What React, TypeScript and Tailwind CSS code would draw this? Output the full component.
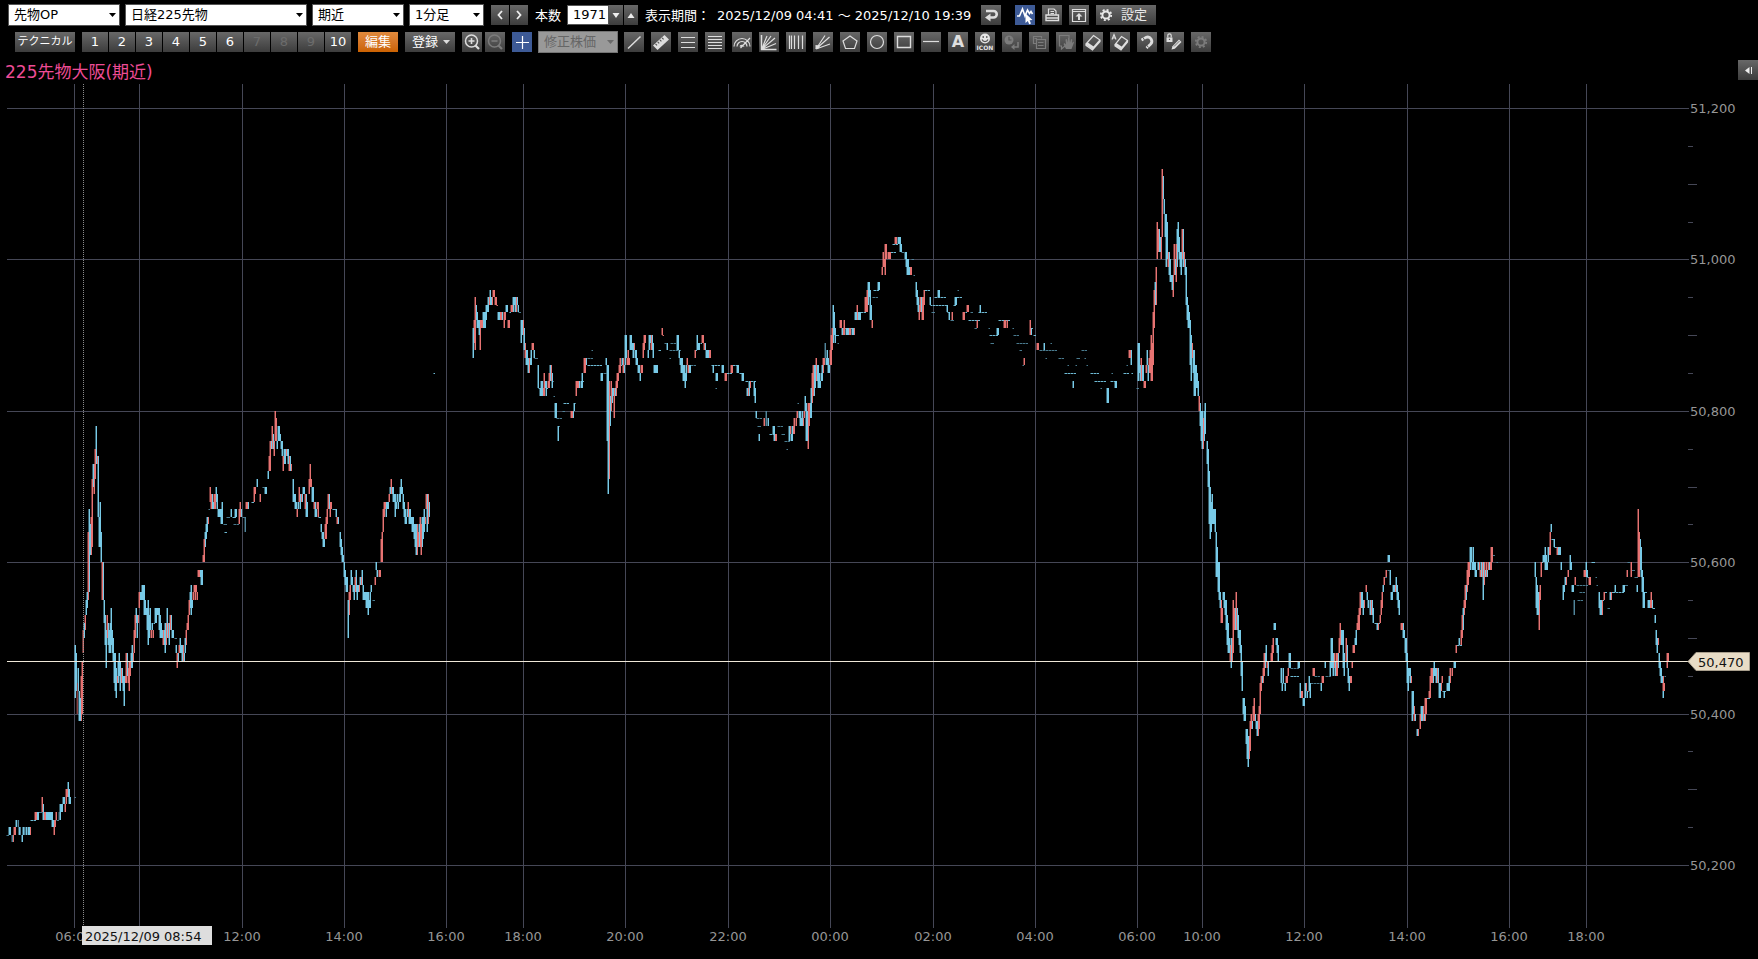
import React from "react";

type Tone = "b" | "r" | "d" | "e";

const toneFill: Record<Tone, string> = {
  b: "#7bd0ee",
  r: "#ee7776",
  d: "#5389a0",
  e: "#8a4545",
};

// Each token is: x, tone, high[-low], optional width. Prices are (price - 50,000) / 10.
const bars = `
7d24w2 9b25-24 10b25-24 12d24-23 13r24-23 14r25-24 15r25-24 16b26-25 18d26-25 19b25-24 20d25-24 22b24-23 23b25-24 24d25-24 26b25-24 28b25-24 29b25-24 30r25-24
31b26w4 35r27-26w2 37b27-26w2 39d27w3 42r29-27 43b28-26 44r27-26w2 46b27-26w2 48b27-26w2 50b27-26 51b27-26 52b27-25 53b26-25 54r26-24 55r26-25 56r27-26 57d26w2 59d27-26 60b28-26 61b28-27 62b28-27 63b29-28 64b29-28 65r28-27 66r30-28 67r30-29 68b31-29 69b30-28 70b29-28 75d29
75b49-42 76b48-43 77e44-40 78b46-43 79b43-39 80b42-39 81r45-39 82r47-40 83r51-48 84b52-50 85r53-51 86b55-53 87b56-54 88r64-55 89b67-56 90b65-61 91r66-61 92r71-62 93b73-70 94r73-69 95r75-71 96b78-73 97r74-73 98b74-66 99b66-62 100b68-62 101b64-60 102r60-55 103b60-55 104b55-52 105b53-49 106b51-46 107r53-50 108b52-49 109b51-48 110b52-48 111b54-49 112b51-48 113b50-47 114b48-44 115b48-43 116b46-42 117r45-44 118b47-44 119b48-45 120b47-43 121r46-44 122b46-44 123b45-43 124b45-41 125r45-44 126r48-44 127b48-45 128r46-44 129r47-43 130r47-45 131b48-46 132b49-46 133r48-47 134r51-48 135r53-50 136b54-52 137b53-50 138r53-52 139r56-54
140b56-55 141b56-55 142b57-55 143b57-55 144b57-53 145b55-53 146b54-53 147b54-51 148b55-49 149b53-50 150b54-51 151r51-50 152b52-51 153r51-50 154b52 155b54-52 156b54-52 157b54-53 158b54-53 159b54-51 160b53-50 161b52-50 162b51-50 163r51-49 164b51-49 165b52-48 166r52-49 167b54-50 168r52-50 169b52-49 170r53-51 171b53-51 172b51-50 173b51-50 175d50w2 176b49-48 177r48-46 178b48-47 179r49-48 180b50-48 181b49-48 182b49-47 183r49-47 184b48-47 185b50-48 186r51-49 187r52-51 188r53-51 189r55-53 190b56-54 191b57-53 192b55-54 193r56-55 194r57-56 195r57-55 196r57-56 197r56-55 198r59-58 199r59-58 200b59-58 201b59-57 202b59-57 203r61-60 204r63-60 205b64-62 206b65-63 207b66-64 208r66-65 209d67
210r70-68 211r69-67 212b69-67 213b68-67 214r69-67 215r69-67 216b70-68 217b69-67 218b67-66 219b67-66 220b67-66 221b67-65 222b68-65 224d65w3 225b64w2 227d66w3 231b67-66 233b66w3 235b67-66 236b67-66 234d65w4 239r67-65 240r68-66 241b67-66 243d66w3 245d66-64 246r68-67 247r68-67 248b68-67 252b68w2 254r70-68 255r70-69 257b71-70 260r69-68 263d70w2 265b70-69 266b70-69 268b72-71 269r74-72 270r76-72 271b76-75 272r78-75 273b77-75 274r76-74 275r80-76 276r79-76 277b76-75 278b78-76 279b78-76 280b77-76 281b76-75 282b76-74 283r74-72 284b75-73 285b75-73 286r75-74 287b75-74 288b75-73 289r74-72 290b74-72 291r73-72
293b71-68 294b69-68 295b69-67 296b68-67 297r67-66 298b68-67 299r70-68 300b69-67 301r69-68 302b69-68 303b70-69 304b70-69 305r69-67 306b69-66 307b68-66 309r71-69 310r73-70 311r71-70 312b70-68 313b70-68 314r68-67 315b68-66 316b67-66 317r68-67 318r68-66 319b66w2 321b65-64 322b64-63 323b64-62 324b63-62 325r65-63 326r66-63 327r67-65 328r69-67 329b69-67 330r68-66 331r68-67 333b67w3 336b67-66 337r66-65 338b66-65 340b64-62 341b63-61 342b62-60 343b61-60 344b60-58 345b59-57 346b58-56 347b58-56 348b55-50 349r56-53 350r57-55 351b59-57 352b58-57 353b57-56 354b57-55 355r58-56 356b59-56 357b57-55 358b57-56 359r57-56 360b58-57 361r58-57 362b59-57 363b57-55 364b56-55 365b56-55 366b56-54 367b56-54 368b56-53 369b55-54 370b56-54 371b57-56 373d55w2 375r58-57 376b60-59 377b59-58 379r59-58 380r59-58 381r63-60 382r64-60 383r67-64 384r68-66 385r68-67 386b68-66 387b68-67 388b68-67 389r69-68 390b70-69
391r71-69 392b70-69 393b70-68 394b69-68 395b69-66 396b68-67 397b69-68 398b68-67 399b69-68 400b70-68 401b71-69 402b70-69 403b69-67 404b68-66 405b67-65 406b66-65 407b67-66 408r68-66 409b67-65 410b67-65 411b66-65 412b66-64 413b66-64 414b65-63 415b65-62 416b65-61 417r65-61 418r64-62 419b65-62 420r66-62 421r65-61 422b66-62 423b66-63 424b67-64 425r66-65 426r69-67 427b69-64 428r69-65 429b68-66 434b85
473b91-87 474r92-89 475r95-88 476b94-92 477b93-91 478b92-91 479b92-90 480r92-88 481r92-91 482r92-91 483b93-91 484b93-91 485b93-91 486b94-92 487b94-93 488b95-93 489r95-94 490b96-94 491b95-94 492r95-94 493r96-95 494r96-95 495r95-94 496r95-94 497r94 498b93-92 499b93-92 500r93-92 501r93-92 502b93-92 504r93-91 505r93-92 506b94-93 507b94-93 508r92-91 509r92-91 510b93 511r94-93 512r94-93 513b95-93 514b95-94 515b95-93 516r95-93 517b95-94 518b94-93 519d93w2 521b92-89 522b92-90 523r92-90 524b91-88 525r89-87 526b88-86 527b88-86 528b87-85 529r87-85 530b87-86 531b88-86 532r89-88 533r89-88 534b88-87 535d87w3 538b86-83 539b83 540b83-82 541b84-82 542b84-82 543r83-82 544r85-82 545b84-83 546b84-82 547b83 548r84-83 549r85-83 550b86-84 551r86-84 552b85-83 553d84 554d82 555b81-79 556b81-79 557d79w5 558b78-76 559d78 564b81w6 563d80w2 571r80-79 572r80-79 573b80-79 574b81-80 575d81 576r84-82 577r84-83 578r84-83 579b84-83 581b84-83 582b85-83 583b84 584r87-85 585r87-85 586b87-86 588d87w4 592d88 588b86w13 601b85-84w2 604d85w3 606b87-86 607b86-76 608b86-69 609r84-71 610b82-78 611r84-80 612b83-81 613b83-82 614r83-79 615b83-82 616r84-82 617r85-83 618r85-84 619r86-85 620r87-85 621b86 622b87-86 623r87-85 624b86-85 625b90-86 626b90-87 627r87-86 628r88-86 629r87-86 630b90-88 631b90-88 632b89-88 633b89-87 634r89-88 635b88-87 636b88-86 637b87-86 638b86-85 639b86-85 640b85-84 641r86-85 642r86-85
643r89-87 644r90-88 645r90-89 648b88-87 649b90-88 650b90-89 651r90-88 652b90-88 653b89-87 654b86-85w4 659b88w2 662r91-90 663r90 665d89w2 667b89-88 670d88w10 670d87 671d89w6 677b90-88 678b90-88 679b88-87 680b87-86 681b87-85 682b87-85 683b86-84 684b86-84 685b85-83 686b86-84 687r87-86 688r86-85 689b86-85 690b86-85 691d86w4 695r88-87 696b88 697b90-88 698b89-88 699b89-88 701b89 702r90-89 703r90-89 704r89-88 705b89-88 706b88-87 707b88-87 708b88-87 709r88-87 710r88-87
712b86w7 713b86-85 716b85-84w2 716d83 722b86-85 723b86-85 725r85-84w2 727b85w4 731r86-85 732r86-85 733b86w6 737b86-85 738b86-85 740b85w3 742b85-84w2 746b84w2 747b83-82 748r83-82 749b84-82 750r84-83 751b84w4 754b84-82 755b83-81 756b80-79 757d79w6 758d78w3 759b77-76 764r79-78 766d80-78 768b79-78 770b77w4 773b78-77 774b78-76 775r77-76 776r77-76 778d78w5 782d77w3 785d76w6 787d75 789b78-76 790r78-77 791b77-76 792b78-76 793r78-77 794r79-77 796r79-78 797r80-79 798d81 799b80-79 800b80-78 801b79-78 802b80-78 803r79-78 804r80-79 805b82-80 806b81-76 807b80-76 808r81-75 809r81-78 810b81-79 811b83-79 812r85-81 813r86-82 814b86-82 815b86-83 816r87-84 817b86-84 818b86-83 819b85-83 820b84-83 821b85-84 822b86-84 823r87-85 824r87-86 825d89-87 826b87-86 827b88-86 828b87-85 829b86-85 830r88-86
831r90-86 832r91-88 833b94-89 834b93-90 835b91-89 836b90 837b90w2 838d89 840r92-91 841r92-91 842b91-90 843r91-90 844r92-90 845r91 846b91-90 847b91-90 848b91-90 849r91-90 850r91-90 851b91 852b91-90 853b91-90 854r91-90 855b93-92w2 857r94-92 858b93-92 859b93-92 860b93-92 861b93w4 865r95-93 866r95-93 867r96-93 868b97-94 869b97-95 870b96-92 871b94-92 872r92-91 873d95w5 874b96w5 878b97-96 879b97-96 882r99-98 883r101-99 884r100-99 885r102-98 886r102-100 888r101-100 889r101-100 890r101-100 891b101w4 893b102w4 895r103-102 896r103-102 898b103-102 899b103-102 900b103-101 901b102-101 902d101w5 905b101-100 906b101-99 907b100-98 908b100-98 909b99-98 910r99-98 911r99-98 912d100w2 914d98
916b97-95 917b96-94 918b95-93 919r94-92 920r95-93 921b95-93 922r95-92 923r95-92 924r96-94 925b96w4 930b95-94 931b94 932d93w3 933b94w15 938b96-95 939b96-95 935b95w12 947b94-93 948b93 949b93-92 951d92w3 952r93-92 954b94w2 955b95-94 956b95-94 957b95w4 958d96 963r93-92 964r93-92 966b93 967r94-93 968r94-93 971d93w2 969b92w10 977r92-91 975d91w2 980b94-93 979b93w9 989d91 990b90w8 997b91-90 998b91-90 991d89w3 999b92w12 1004r92-91 1005r92-91 1007r92-91 1013d91 1014d90w4 1017d89w4 1020d88w2 1024r87-86 1023d86 1023d89w6 1030r92-90 1031b91-90 1032b91 1034b90w2 1037r89-88 1038r89-88 1040d88w18 1044b89-88 1051d89 1046d87 1059d87w4 1065b85w10 1068d86 1073b84-83 1076d86 1077d87w3 1082d88w4 1085d87 1087d86 1091b85w7 1095b84w10 1101d83 1107b83-81 1108b83-81 1111b84w6 1115b84-83 1116b84-83 1112d85 1124b85w4 1127d86 1129r88-87 1130r88-87 1131b88-86 1132b85
1137d83w2 1138b89-84 1139b89-85 1140b86-84 1141r87-84 1142b86-84 1143b86-84 1144r84-83 1145r84-83 1146r86-85 1147b88-86 1148b86-84 1149r87-85 1150r88-85 1151r90-84 1152r89-84 1153r93-86 1154r96-91 1155b97-94 1156r99-94 1157r105-100 1158r104-101 1159b104-101 1160b103-101 1161r103-100 1162r112-103 1163b111-108 1164b108-106 1165b106-103 1166b106-99 1167b105-100 1168r101-99 1169b101-98 1170b100-97 1171b98-97 1172b98-96 1173r98-95 1174r102-98 1175b100-98 1176r102-97 1177b104-99 1178b105-101 1179b103-100 1180b101-99 1181b101-98 1182r104-100 1183b104-99 1184r101-99 1185b100-98 1186b99-94 1187b95-92 1188b94-91 1189b93-91 1190b92-86 1191b90-84 1192r89-87 1193b88-85 1194b88-82 1195b86-82 1196b86-83 1197b85-83 1198b84-82 1199r82-80 1200b81-78 1201b80-76 1202b80-75 1203r79-75 1204b80-76 1205b81-77 1207b76-73 1208b75-70 1209b72-65 1210b70-63 1211b68-64 1212b69-65 1213b67-65 1214b67-65 1215b67-64 1216b64-58 1217b62-58 1218b60-56 1219b60-55 1220b56-54 1221r55-52 1222r54-52 1223b56-55 1224b56-54 1225b55-53 1226b55-51 1227b53-49 1228b52-48 1229b50-48 1230r49-47 1231b50-46 1232r50-47 1233r55-48 1234r54-51 1235b54-51 1236r56-51 1237b54-51 1238b53-50 1239b51-49 1240b51-48 1241b49-45 1242b47-43 1243b42-40 1244b42-39 1245b41-39 1246b38-36 1247b38-34 1248b37-33 1249r37-34 1250r39-35 1251r40-38 1252b39-38 1253r41-39 1254r42-39 1255b40-39 1256b39-38 1257b39-37 1258r40-37 1259r41-38 1260r44-40 1261r45-43 1262b45-44 1263r46-44 1264r48-45 1265b48-46 1266b49-47 1267r47-46 1268b47-45 1269d47w2 1271r48-47 1272r49-47 1273r50-48 1274b52-51 1275b52-51 1276b50-49 1277b50-48 1278b49-47 1281b46-44 1282b44-43 1283b46-44 1284b44 1285b44-43 1286r45-44 1287r45-44 1288r46-45 1289b48-46 1290b48-46 1291d46w7 1291b45w9 1298b47-46 1299b47-46
1300b44-42 1301r43-42 1302r43-42 1303b42-41 1304b42-41 1305b44-42 1306r44-43 1307b43-42 1308r43 1309b45-43 1310b44-42 1311d44w10 1313r46-45 1314r46-45 1315d45w6 1321b44-43 1322r45-44 1323r45-44 1325b47-46 1326d45w5 1330b47-45 1331b50-46 1332b50-46 1333b48-45 1334r48-46 1335b47-45 1336r48-45 1337r48-45 1338b48-46 1339r50-48 1340r52-49 1341b51-49 1342b51-49 1343b51-46 1344b48-45 1346r50-47 1347b49-46 1348b46-44 1349b45-43 1350r45-44 1351r45-44 1352r47-46 1353r49-48w2 1355b50-49 1356b51-49 1357r52-51 1358r53-51 1359r54-51 1360r56-53 1361b56-54 1362b56-54 1363b55-53 1364r55-54 1366r57-56 1367b56-55 1368b55-54 1370b55-53 1371r55-53 1372b55-53 1373b54-52 1375b52w6 1377b52-51 1378r52-51 1380r53-52 1381r55-53 1382r56-54 1383b57-56 1384r58-57 1385d58w2 1386r59-58 1388b61-60 1389b61-60 1388d59w3 1390b59-57 1391b56-55 1392b56-55 1393b57-56 1394b57-56 1395r57-56 1396b58-56 1397b57-55 1398b56-54 1399b55-53 1401r52-51w2 1403b52-50 1404b51-50 1405b50-48 1406b50-47 1407b48-44 1408b46-43 1409b46-45 1410b46-44 1411r45-44 1412b43-39 1413b43-40 1414r41-39 1415b40-39 1417b38-37 1418r38-37 1420r40-38 1421b41-39 1422b41-39 1423r41-39 1424b40-39 1425r42-39 1426r42-40 1427b42w3 1429r43-42 1430r45-42 1431r46-44 1432r46-44 1433b46-44 1434b47-45 1435b46-45 1436b46-44 1437r46-44 1438b46-44 1439b44-42 1440b44-42 1441r44-43 1442r45-44 1443b43w2 1444b43-42 1445b43 1447b44-43 1448b44-43 1449b45-43 1450r46-44 1452r46-45 1454b47-46 1455b47-46 1456r49-48 1457b49w4 1459b50-49 1461r51-49 1462r53-50 1463b54-51 1464r55-53 1465r57-54 1466b57-55 1467r59-56 1468r60-57 1469r60-58 1470b62-59 1471b62-60 1472b60-59 1473b62-59 1474b60-59 1475b60-58 1476b59-58 1478b60-59 1479r60-59 1480r59-58 1481b60-58 1482r60-58 1483b60-55 1484r60-57 1485b59-58 1486r60-58 1487b59-58 1488r60-59 1489b60-59 1490r60-59 1491r62-59 1492r62-60 1493d61w2 1497d60
1535b60-58 1536b58-54 1537b57-53 1538b56-53 1539r56-51 1540r57-55 1541r60-58 1542b60 1543b61-60 1544b61-60 1545b62-59 1546b61-59 1547b60-59 1548b62-60 1549r62-61 1550r64-61 1551b65-64 1552b63w2 1554b63-62 1555b62w2 1557r62-61 1558b62-61 1559b62-61 1560b62-61 1561b60-59 1563b57-55 1564b57-56 1565b58-57 1566r58-57 1568r59-58 1570b61-59 1571b60-59 1572b57-56 1573b57-56 1574d55-53 1575r58-57 1577d57w10 1580d56w5 1578d55w6 1584r59-58 1585r59-58 1586b60-58 1587b59-58 1588b58 1589r58-57 1590r58-57 1592b60w3 1596d58 1597d57 1599b56-54 1600b55-53 1601b55-53 1602r55-53 1603b55 1604r56-55 1605b56w2 1608d54w2 1610b56-55 1611r56-55 1612b56w3 1615b57-56 1616b56w7 1623b57-56 1624b57-56 1625d57w3 1627r59-58 1628d60w2 1631r60-58 1632d59w3 1635d58w3 1637b57-56 1638r67-58 1639r64-58 1640b63-59 1641b62-58 1642b59-56 1643b58-54 1644b56-54 1645b56w2 1648b55-54 1649b55-54 1650r55-54 1651r56-54 1652b55-54 1653b54w2 1655b53-52 1656b51-49 1657b50-48 1658r50-49 1659b48-46 1660b47-45 1661b46-44 1662b45-44 1663b43-42 1663r45-43 1664r44-43 1665d45 1667r48-46 1668r48-47
`;

const priceY = (p: number) => Math.round(865 - (p - 20) * 7.57);

// A flat run of several minutes is drawn as a row of short dots.
const dots = (x: number, w: number) =>
  w < 4 ? [{ x, w }] : Array.from({ length: Math.ceil(w / 3) }, (_, i) => ({ x: x + i * 3, w: 2 }));

const candles = bars
  .trim()
  .split(/\s+/)
  .flatMap((token) => {
    const m = token.match(/^(\d+)([brde])(\d+)(?:-(\d+))?(?:w(\d+))?$/);
    if (!m) return [];
    const hi = Number(m[3]);
    const lo = m[4] ? Number(m[4]) : hi;
    const y = priceY(hi);
    const h = Math.max(1, priceY(lo) - y);
    const x = Number(m[1]);
    const w = Number(m[5] ?? 1);
    return (lo === hi ? dots(x, w) : [{ x, w }]).map((part) => ({ ...part, tone: m[2] as Tone, y, h }));
  });

const timeLines: [number, string][] = [
  [74, "06:00"], [139, ""], [242, "12:00"], [344, "14:00"], [446, "16:00"], [523, "18:00"],
  [625, "20:00"], [728, "22:00"], [830, "00:00"], [933, "02:00"], [1035, "04:00"], [1137, "06:00"],
  [1202, "10:00"], [1304, "12:00"], [1407, "14:00"], [1509, "16:00"], [1586, "18:00"],
];

const priceLines: [number, string][] = [
  [120, "51,200"], [100, "51,000"], [80, "50,800"], [60, "50,600"], [40, "50,400"], [20, "50,200"],
];

const minorTicks = [115, 110, 105, 95, 90, 85, 75, 70, 65, 55, 50, 45, 35, 30, 25];

const face = "bg-linear-to-b from-[#686868] to-[#3d3d3d]";

function IconSvg({ children }: { children: React.ReactNode }) {
  return (
    <svg viewBox="0 0 20 20" className="block size-5" fill="none" stroke="currentColor" strokeWidth="1.2" aria-hidden="true">
      {children}
    </svg>
  );
}

function IconButton({ label, children, active = false, disabled = false }: {
  label: string; children: React.ReactNode; active?: boolean; disabled?: boolean;
}) {
  const look = active ? "bg-[#3d5a96] text-white" : disabled ? `${face} text-[#7c7c7c]` : `${face} text-[#dedede]`;
  return (
    <button type="button" aria-label={label} disabled={disabled} className={`block size-5 shrink-0 ${look}`}>
      <IconSvg>{children}</IconSvg>
    </button>
  );
}

function Select({ label, value, width }: { label: string; value: string; width: string }) {
  return (
    <div className={`relative h-[22px] shrink-0 ${width}`}>
      <select aria-label={label} className="size-full appearance-none border border-[#555] bg-white pl-[5px] text-[13px] leading-5 text-black">
        <option>{value}</option>
      </select>
      <svg viewBox="0 0 7 4" className="pointer-events-none absolute top-[9px] right-1 h-1 w-[7px]" aria-hidden="true">
        <path d="M0 0H7L3.5 4Z" fill="#000" />
      </svg>
    </div>
  );
}

function NumberButton({ n }: { n: number }) {
  const off = n >= 7 && n <= 9;
  return (
    <button type="button" disabled={off} className={`h-5 w-[26px] leading-5 ${face} ${off ? "text-[#6c6c6c]" : "text-white"}`}>
      {n}
    </button>
  );
}

const gear = (
  <>
    <circle cx="10" cy="10" r="3.6" strokeWidth="2" />
    <circle cx="10" cy="10" r="5.2" strokeWidth="1.8" strokeDasharray="2.04 2.04" />
  </>
);

function TopBar() {
  return (
    <div className="flex h-[22px] items-center pl-2">
      <div className="flex gap-[5px]">
        <Select label="商品" value="先物OP" width="w-28" />
        <Select label="銘柄" value="日経225先物" width="w-[182px]" />
        <Select label="限月" value="期近" width="w-[92px]" />
        <Select label="足種" value="1分足" width="w-[75px]" />
      </div>
      <div className="ml-[7px] flex">
        <button type="button" aria-label="前へ" className={`h-5 w-[18px] ${face}`}>
          <svg viewBox="0 0 18 20" className="h-5 w-[18px]" aria-hidden="true"><path d="M11 6 7.5 10 11 14" fill="none" stroke="#eee" strokeWidth="1.8" /></svg>
        </button>
        <button type="button" aria-label="次へ" className={`ml-px h-5 w-[18px] ${face}`}>
          <svg viewBox="0 0 18 20" className="h-5 w-[18px]" aria-hidden="true"><path d="M7 6 10.5 10 7 14" fill="none" stroke="#eee" strokeWidth="1.8" /></svg>
        </button>
      </div>
      <label htmlFor="count" className="ml-[7px] shrink-0 pt-[2px]">本数</label>
      <input id="count" defaultValue="1971" className="ml-[6px] h-5 w-[42px] border border-[#555] bg-white pr-[2px] text-right text-[13px] text-black" />
      <button type="button" aria-label="減らす" className={`h-5 w-[14px] ${face}`}>
        <svg viewBox="0 0 14 20" className="h-5 w-[14px]" aria-hidden="true"><path d="M3.5 8H10.5L7 13Z" fill="#eee" /></svg>
      </button>
      <button type="button" aria-label="増やす" className={`ml-px h-5 w-[14px] ${face}`}>
        <svg viewBox="0 0 14 20" className="h-5 w-[14px]" aria-hidden="true"><path d="M3.5 13H10.5L7 8Z" fill="#eee" /></svg>
      </button>
      <div className="ml-[7px] flex shrink-0 pt-[2px] whitespace-nowrap">
        <span className="w-[72px]">表示期間：</span>
        <span className="w-[257px]">2025/12/09 04:41 ～ 2025/12/10 19:39</span>
      </div>
      <div className="ml-[7px] flex gap-[7px]">
        <IconButton label="戻す">
          <path d="M5 6H12.5A3.2 3.2 0 0 1 12.5 12.5H9" strokeWidth="2.6" />
          <path d="M4 12.5 9.5 8.5V16.5Z" fill="currentColor" stroke="none" />
        </IconButton>
        <div className="ml-[7px] flex">
          <IconButton label="チャート選択" active>
            <path d="M2 11 4.5 11 7.5 4 10 11 12.5 5 14.5 8.5 16 6.5 17.5 9" strokeWidth="1.6" />
            <path d="M10.5 8.5V18L12.8 16L14.2 19.2L16 18.4L14.6 15.2L17.5 15Z" fill="currentColor" stroke="none" />
          </IconButton>
        </div>
        <IconButton label="印刷">
          <path d="M6.500 10V4H12L14 6V10M8.500 6.500H12M8.500 8.500H12" />
          <path d="M4 10H16.500V15.500H4ZM4 13H16.500" strokeWidth="1.4" />
        </IconButton>
        <IconButton label="出力">
          <path d="M3.500 4.500H16.500V16.500H3.500ZM3.500 6.500H16.500" />
          <path d="M10 8 13.500 11.500H11V15H9V11.500H6.500Z" fill="currentColor" stroke="none" />
        </IconButton>
        <button type="button" className={`flex h-5 w-[60px] items-center text-[#e8e8e8] ${face}`}>
          <IconSvg>{gear}</IconSvg>
          <span className="ml-[5px]">設定</span>
        </button>
      </div>
    </div>
  );
}

function ToolBar() {
  return (
    <div className="flex h-5 items-center gap-[7px] pl-[15px]">
      <button type="button" className={`h-5 w-[60px] shrink-0 whitespace-nowrap text-[11px] ${face}`}>テクニカル</button>
      <div className="flex gap-px">
        {[1, 2, 3, 4, 5, 6, 7, 8, 9, 10].map((n) => <NumberButton key={n} n={n} />)}
      </div>
      <button type="button" className="h-5 w-10 shrink-0 bg-linear-to-b from-[#e08a3c] to-[#cb6200]">編集</button>
      <button type="button" className={`flex h-5 w-[50px] shrink-0 items-center justify-between px-[5px] pl-[7px] whitespace-nowrap ${face}`}>
        登録
        <svg viewBox="0 0 7 4" className="h-1 w-[7px]" aria-hidden="true"><path d="M0 0H7L3.5 4Z" fill="#ddd" /></svg>
      </button>
      <div className="flex gap-[3px]">
        <IconButton label="拡大">
          <circle cx="9.5" cy="9" r="6" strokeWidth="1.5" />
          <path d="M9.5 6V12M6.5 9H12.5" strokeWidth="1.6" /><path d="M13.5 13.5 17 17" strokeWidth="2.2" />
        </IconButton>
        <IconButton label="縮小" disabled>
          <circle cx="9.5" cy="9" r="6" strokeWidth="1.5" />
          <path d="M6.5 9H12.5" strokeWidth="1.6" /><path d="M13.5 13.5 17 17" strokeWidth="2.2" />
        </IconButton>
      </div>
      <IconButton label="十字カーソル" active>
        <path d="M10.5 4V17M4 10.5H17" strokeWidth="1.2" />
      </IconButton>
      <div className="relative -ml-px h-[22px] w-20 shrink-0">
        <select aria-label="修正株価" disabled className="size-full appearance-none border border-[#747474] bg-[#999] pl-[5px] text-[13px] leading-5 text-[#666] opacity-100">
          <option>修正株価</option>
        </select>
        <svg viewBox="0 0 7 4" className="pointer-events-none absolute top-[9px] right-1 h-1 w-[7px]" aria-hidden="true"><path d="M0 0H7L3.5 4Z" fill="#6a6a6a" /></svg>
      </div>
      <div className="-ml-px flex gap-[7px]">
        <IconButton label="直線"><path d="M4 16.5 16.5 4.5" strokeWidth="1.5" /></IconButton>
        <IconButton label="定規">
          <path d="M2 13.5 13.5 3 18 7.5 6.5 18Z" fill="currentColor" stroke="none" />
          <path d="M4.500 11.800 6 13.300M6.700 9.800 8.200 11.300M8.900 7.800 10.400 9.300M11.100 5.800 12.600 7.300" stroke="#555" />
        </IconButton>
        <IconButton label="平行線3本"><path d="M3 5.500H17M3 10.500H17M3 15.500H17" /></IconButton>
        <IconButton label="平行線5本"><path d="M3 4.500H17M3 7.500H17M3 10.500H17M3 13.500H17M3 16.500H17" /></IconButton>
        <IconButton label="ファンアーク">
          <path d="M2 14.500A8 8 0 0 1 18 14.500M5 14.500A5 5 0 0 1 15 14.500M8 14.500A2.300 2.300 0 0 1 12 14.500M8.500 16 18 6" />
        </IconButton>
        <IconButton label="ギャンファン">
          <path d="M2.500 3V17.500H17.500" strokeWidth="1.500" />
          <path d="M2.500 17.500 8 4M2.500 17.500 12 4M2.500 17.500 16 6M2.500 17.500 17 11.500" />
        </IconButton>
        <IconButton label="タイムゾーン"><path d="M3.500 3.500V17M5.500 3.500V17M8.500 3.500V17M12.500 3.500V17M16.500 3.500V17" /></IconButton>
        <IconButton label="スピードライン">
          <path d="M3 17 12 3.500M3 17 16.500 5M3 17 17 12" /><path d="M2.500 13 7 13.500 5 17H2.500Z" fill="currentColor" stroke="none" />
        </IconButton>
        <IconButton label="五角形"><path d="M10 4 17 9 14.500 16.500H5.500L3 9Z" /></IconButton>
        <IconButton label="円"><circle cx="10" cy="10" r="6.5" /></IconButton>
        <IconButton label="四角形"><path d="M3.500 4.500H16.500V15.500H3.500Z" strokeWidth="1.400" /></IconButton>
        <IconButton label="水平線"><path d="M2 9.500H18" /></IconButton>
        <button type="button" aria-label="文字" className={`size-5 text-[16px] leading-5 font-bold text-[#e0e0e0] ${face}`}>A</button>
        <button type="button" aria-label="アイコン" className={`flex size-5 flex-col items-center text-[#e6e6e6] ${face}`}>
          <svg viewBox="0 0 20 12" className="h-3 w-5" aria-hidden="true">
            <circle cx="10" cy="6.5" r="5" fill="currentColor" />
            <path d="M7 7.5A3.2 3.2 0 0 0 13 7.5M8.2 4V6M11.8 4V6" fill="none" stroke="#555" strokeWidth="1.2" />
          </svg>
          <span className="text-[6px] leading-[7px] font-bold">ICON</span>
        </button>
        <IconButton label="時間を戻す" disabled>
          <circle cx="7" cy="8" r="4.5" fill="currentColor" stroke="none" /><path d="M7 5V8H9.5" stroke="#505050" />
          <path d="M16 10V15H11.5" strokeWidth="1.6" /><path d="M9 15 12.5 12V18Z" fill="currentColor" stroke="none" />
        </IconButton>
        <IconButton label="コピー" disabled>
          <path d="M7 11.500H4.500V4.500H12.500V6.500M5.500 6.500H8M7.500 7.500H16.500V16.500H7.500ZM9 10.500H14.500M9 13.500H14.500" />
        </IconButton>
        <IconButton label="移動" disabled>
          <path d="M9 14 5.500 17V14H3.500V3.500H13V6" />
          <path d="M10 17 7.500 12 8.500 11 10 12.500 9.500 7.500 11 7 12 10.500 12 6 13.500 6 14 10.500 15 7 16.300 7.500 16 11 17.500 9.500 18 10.500 15.500 17Z" fill="currentColor" stroke="none" />
        </IconButton>
        <IconButton label="消去">
          <path d="M10.500 3.500 17 8 9.500 16.500 3 12ZM3 12V13.500L9.500 18 17 9.500V8" />
          <path d="M3 12 4.500 10.300 11 14.800 9.500 16.500Z" fill="currentColor" stroke="none" />
        </IconButton>
        <IconButton label="全消去">
          <path d="M11.500 4.500 17.500 8.500 11 16.500 5 12.500ZM5 12.500V14L11 18 17.500 10V8.500" />
          <path d="M5 12.500 6.300 10.900 12.300 14.900 11 16.500Z" fill="currentColor" stroke="none" />
          <path d="M2 7.500 4 2.500 6 7.500M2.800 6H5.200" />
        </IconButton>
        <IconButton label="磁石">
          <path d="M4.500 8 9 5.400A4.200 4.200 0 0 1 13.500 12.300L9.500 16" strokeWidth="2.800" />
          <path d="M6 5.500 7.500 8M9.500 13 11.500 15.500" stroke="#555" strokeWidth="1" />
        </IconButton>
        <IconButton label="描画ロック">
          <path d="M2.500 5.500H8.500V10H2.500Z" fill="currentColor" stroke="none" /><path d="M3.800 5.500V3.500A1.700 1.700 0 0 1 7.200 3.500V5.500" />
          <path d="M5.500 8V6.800" stroke="#555" />
          <path d="M7.500 17.500 8.500 14.300 15 7.500 17.500 10 10.800 16.700Z" fill="currentColor" stroke="none" /><path d="M10 14.500 15.500 9" stroke="#555" strokeWidth="0.800" />
        </IconButton>
        <IconButton label="描画設定" disabled>{gear}</IconButton>
      </div>
    </div>
  );
}

function Chart() {
  return (
    <svg viewBox="0 82 1758 876" className="block w-full text-[13px]" role="img" aria-label="225先物大阪(期近) 1分足">
      <g shapeRendering="crispEdges" fill="#454756">
        {priceLines.map(([p]) => <rect key={p} x="7" y={priceY(p)} width="1682" height="1" />)}
        {timeLines.map(([x]) => <rect key={x} x={x} y="84" width="1" height="844" />)}
        {minorTicks.map((p) => <rect key={p} x="1688" y={priceY(p)} width={p % 10 ? 5 : 9} height="1" />)}
      </g>
      <g shapeRendering="crispEdges" opacity="0.45">
        {candles.map((c, i) => <rect key={i} x={c.x - 1} y={c.y} width={c.w + 1} height={c.h} fill={toneFill[c.tone]} />)}
      </g>
      <g shapeRendering="crispEdges">
        {candles.map((c, i) => <rect key={i} x={c.x} y={c.y} width={c.w} height={c.h} fill={toneFill[c.tone]} opacity={c.h === 1 ? 0.8 : 0.95} />)}
        <rect x="7" y="661" width="1682" height="1" fill="#efe8d8" />
        <path d="M83.5 84V926" stroke="#8a8a8a" strokeDasharray="1 1" />
      </g>
      <g fill="#969696">
        {priceLines.map(([p, label]) => <text key={p} x="1690" y={priceY(p) + 5}>{label}</text>)}
        {timeLines.map(([x, label]) => label && <text key={x} x={x} y="941" textAnchor="middle">{label}</text>)}
      </g>
      <path d="M1688 661.5 1696 652.5H1749.5V670.5H1696Z" fill="#e8dcc6" stroke="#a89e8c" />
      <text x="1698" y="667" fill="#111">50,470</text>
      <rect x="82" y="926" width="130" height="19" fill="#dedede" />
      <text x="85" y="941" fill="#111">2025/12/09 08:54</text>
    </svg>
  );
}

export default function App() {
  return (
    <main className="min-h-screen overflow-x-hidden bg-black pt-1 font-['DejaVu_Sans','Noto_Sans_CJK_JP',sans-serif] text-[13px] leading-5 text-white">
      <TopBar />
      <div className="mt-[6px]"><ToolBar /></div>
      <div className="mt-2 flex h-[22px] items-start justify-between">
        <h1 className="pl-[5px] text-[17px] leading-6 text-[#ee4c96]">225先物大阪(期近)</h1>
        <button type="button" aria-label="パネルを開く" className={`size-5 ${face}`}>
          <svg viewBox="0 0 20 20" className="size-5" aria-hidden="true"><path d="M7 10.5 11.5 7V14ZM13 7H14V14H13Z" fill="#eee" /></svg>
        </button>
      </div>
      <Chart />
    </main>
  );
}
